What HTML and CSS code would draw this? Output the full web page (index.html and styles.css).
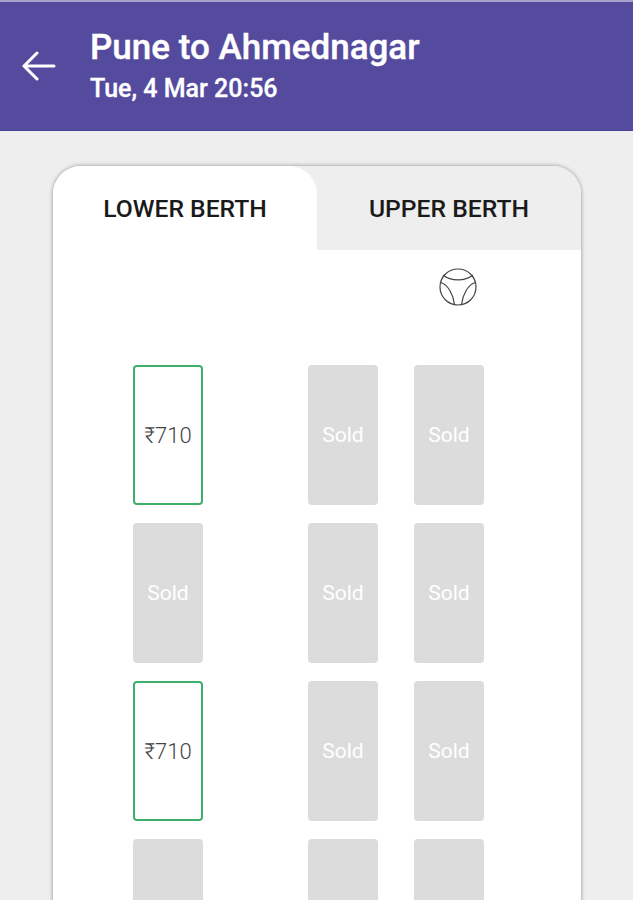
FILE: index.html
```html
<!DOCTYPE html>
<html lang="en">
<head>
  <meta charset="UTF-8" />
  <meta name="viewport" content="width=device-width, initial-scale=1.0"/>
  <title>Pune to Ahmednagar</title>
  <link rel="stylesheet" href="styles.css">
</head>
<body>
  <header class="topbar">
    <svg class="back" viewBox="0 0 34 30" width="34" height="30" fill="none" stroke="#fff" stroke-width="3" stroke-linecap="round" stroke-linejoin="round">
      <path d="M2 15H32M15 2L2 15L15 28"/>
    </svg>
    <div class="trip">
      <div class="route">Pune to Ahmednagar</div>
      <div class="when">Tue, 4 Mar 20:56</div>
    </div>
  </header>

  <main class="content">
    <div class="card">
      <div class="tabs">
        <div class="tab active">LOWER BERTH</div>
        <div class="tab">UPPER BERTH</div>
      </div>

      <div class="driver">
        <svg viewBox="0 0 38 38" width="38" height="38" fill="none" stroke="#444" stroke-width="1.2">
          <circle cx="19" cy="19" r="18"/>
          <path d="M4 7C12 13.5 26 13.5 34 7"/>
          <path d="M1.5 14.5C9 16.5 14 26 15.5 36.5"/>
          <path d="M36.5 14.5C29 16.5 24 26 22.5 36.5"/>
        </svg>
      </div>

      <div class="seats">
        <div class="row">
          <div class="seat open">₹710</div>
          <div class="pair">
            <div class="seat sold">Sold</div>
            <div class="seat sold">Sold</div>
          </div>
        </div>
        <div class="row">
          <div class="seat sold">Sold</div>
          <div class="pair">
            <div class="seat sold">Sold</div>
            <div class="seat sold">Sold</div>
          </div>
        </div>
        <div class="row">
          <div class="seat open">₹710</div>
          <div class="pair">
            <div class="seat sold">Sold</div>
            <div class="seat sold">Sold</div>
          </div>
        </div>
        <!-- last row runs off the screen, its label is below the fold -->
        <div class="row">
          <div class="seat sold"></div>
          <div class="pair">
            <div class="seat sold"></div>
            <div class="seat sold"></div>
          </div>
        </div>
      </div>
    </div>
  </main>
</body>
</html>
```

FILE: styles.css
```css
* { box-sizing: border-box; }

html, body {
  height: 100%;
  overflow: hidden;
}

body {
  font-family: Roboto, "Liberation Sans", sans-serif;
  margin: 0;
  background: #eeeeee;
}

.topbar {
  height: 131px;
  background: #544a9e;
  border-top: 2px solid #a5a0cc;
  border-bottom: 1px solid #4a4096;
  display: flex;
  align-items: center;
  padding: 0 0 1px 22px;
  gap: 34px;
  color: white;
}

.route {
  font-size: 35px;
  font-weight: 500;
  line-height: 40px;
  -webkit-text-stroke: 0.4px white;
}

.when {
  font-size: 25px;
  font-weight: 500;
  line-height: 28px;
  margin-top: 7px;
  -webkit-text-stroke: 0.3px white;
}

.content {
  padding: 35px 52px 0 53px;
}

.card {
  background: white;
  border-radius: 28px 28px 0 0;
  box-shadow: 0 0 4px rgba(0,0,0,0.4);
}

.tabs {
  display: flex;
  height: 84px;
  background: #eeeeee;
  border-radius: 28px 28px 0 0;
}

.tab {
  flex: 1;
  display: flex;
  align-items: center;
  justify-content: center;
  font-size: 24.7px;
  font-weight: 500;
  color: #1a1a1a;
}

.tab.active {
  flex: 0 0 264px;
  background: white;
  border-radius: 28px 28px 0 0;
}

.driver {
  display: flex;
  justify-content: flex-end;
  padding: 18px 104px 0 0;
  height: 115px;
}

.seats {
  display: flex;
  flex-direction: column;
  gap: 18px;
  padding-left: 80px;
}

.row {
  display: flex;
  gap: 105px;
}

.pair {
  display: flex;
  gap: 36px;
}

.seat {
  width: 70px;
  height: 140px;
  border-radius: 4px;
  display: flex;
  align-items: center;
  justify-content: center;
  font-size: 21px;
}

.seat.open {
  border: 2px solid #3fb06c;
  color: #444;
  font-size: 22px;
  font-weight: 300;
}

.seat.sold {
  background: #dcdcdc;
  color: white;
}
```
